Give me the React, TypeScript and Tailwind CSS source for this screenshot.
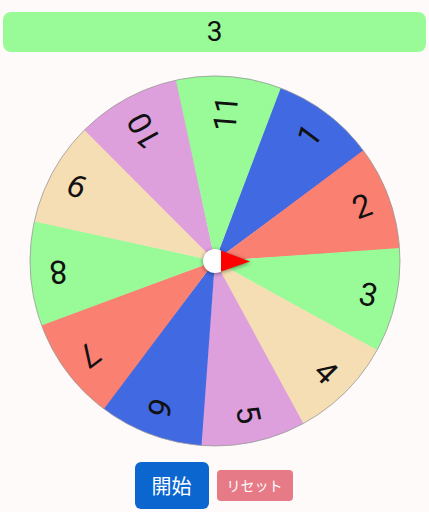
import React from 'react';

const SEGMENTS = [
  { label: '1', color: '#4169e1' },
  { label: '2', color: '#fa8072' },
  { label: '3', color: '#98fb98' },
  { label: '4', color: '#f5deb3' },
  { label: '5', color: '#dda0dd' },
  { label: '6', color: '#4169e1' },
  { label: '7', color: '#fa8072' },
  { label: '8', color: '#98fb98' },
  { label: '9', color: '#f5deb3' },
  { label: '10', color: '#dda0dd' },
  { label: '11', color: '#98fb98' },
];

const SIZE = 372;
const C = SIZE / 2;
const R = 185;
const STEP = 360 / SEGMENTS.length;
// segment "3" starts just above the pointer
const OFFSET = -4 - 2 * STEP;

function rad(d: number) {
  return (d * Math.PI) / 180;
}

function slice(a0: number, a1: number) {
  const x0 = C + R * Math.cos(rad(a0));
  const y0 = C + R * Math.sin(rad(a0));
  const x1 = C + R * Math.cos(rad(a1));
  const y1 = C + R * Math.sin(rad(a1));
  return `M${C},${C} L${x0},${y0} A${R},${R} 0 0 1 ${x1},${y1} Z`;
}

function Wheel() {
  return (
    <svg width={SIZE} height={SIZE} viewBox={`0 0 ${SIZE} ${SIZE}`} className="block">
      {SEGMENTS.map((s, i) => {
        const a0 = OFFSET + i * STEP;
        return <path key={s.label} d={slice(a0, a0 + STEP + 0.3)} fill={s.color} />;
      })}
      <circle cx={C} cy={C} r={R} fill="none" stroke="#9a9a9a" strokeWidth={0.8} />
      {SEGMENTS.map((s, i) => {
        const mid = OFFSET + i * STEP + STEP / 2;
        return (
          <text
            key={s.label}
            x={166}
            y={0}
            transform={`translate(${C} ${C}) rotate(${mid})`}
            textAnchor="end"
            dominantBaseline="central"
            fontSize={32}
            fill="#111"
            style={{ fontFamily: 'Roboto, "Liberation Sans", sans-serif' }}
          >
            {s.label}
          </text>
        );
      })}
      <g className="drop-shadow-[0_1px_2px_rgba(0,0,0,0.45)]">
        <circle cx={C} cy={C} r={12} fill="#ffffff" />
        <polygon points={`${C + 6},${C - 10.5} ${C + 6},${C + 10.5} ${C + 35},${C + 0.5}`} fill="#ff0000" />
      </g>
    </svg>
  );
}

export default function App() {
  return (
    <div className="min-h-screen bg-[#fffafa] px-[3px] pt-[12px] font-['Roboto','Noto_Sans_CJK_JP',sans-serif]">
      <div className="flex h-10 items-center justify-center rounded-lg bg-[#98fb98] text-[28px] leading-none text-[#111]">3</div>

      <div className="mt-[23px] flex justify-center">
        <Wheel />
      </div>

      <div className="mt-[15px] flex items-center justify-center gap-2 pr-[2px]">
        <button className="h-[47px] w-[74px] rounded-md bg-[#0b66d0] text-[20px] text-white font-['Noto_Sans_CJK_JP',sans-serif]">
          開始
        </button>
        <button className="h-[31px] w-[76px] rounded bg-[#e67b87] text-[14px] text-white font-['Noto_Sans_CJK_JP',sans-serif]">
          リセット
        </button>
      </div>
    </div>
  );
}
